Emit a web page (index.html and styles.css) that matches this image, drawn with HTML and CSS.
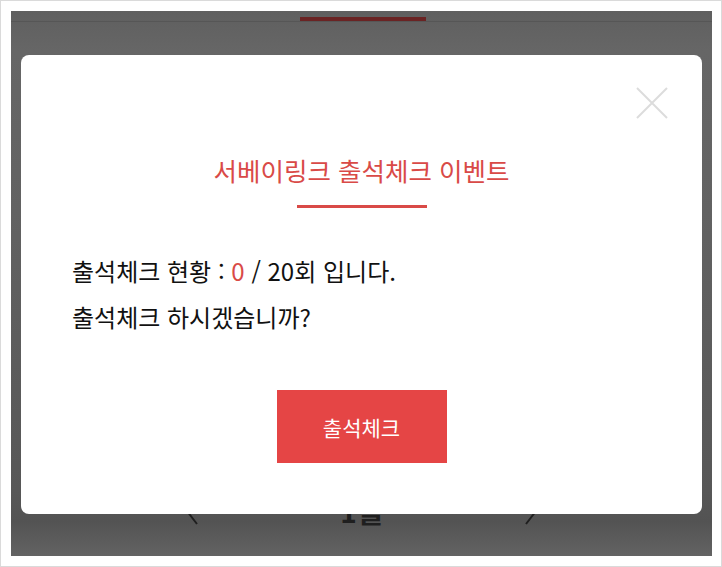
FILE: index.html
```html
<!DOCTYPE html>
<html lang="ko">
<head>
<meta charset="UTF-8">
<meta name="viewport" content="width=device-width, initial-scale=1.0">
<title>출석체크 이벤트</title>
<link rel="stylesheet" href="styles.css">
</head>
<body>
<div class="frame">
    <div class="screen">
        <div class="tab-bar">
            <span class="tab-indicator"></span>
        </div>
        <div class="calendar-head">
            <svg class="arrow" viewBox="0 0 16 30" width="16" height="30"><path d="M13 2 L3 15 L13 28" fill="none" stroke="#1f1f1f" stroke-width="2"/></svg>
            <span class="month">1월</span>
            <svg class="arrow" viewBox="0 0 16 30" width="16" height="30"><path d="M3 2 L13 15 L3 28" fill="none" stroke="#1f1f1f" stroke-width="2"/></svg>
        </div>

        <div class="modal">
            <button class="close" aria-label="닫기">
                <svg viewBox="0 0 32 32" width="32" height="32"><path d="M1 1 L31 31 M31 1 L1 31" stroke="#dcdcdc" stroke-width="2"/></svg>
            </button>
            <h2 class="modal-title">서베이링크 출석체크 이벤트</h2>
            <div class="title-rule"></div>
            <div class="status">
                <p>출석체크 현황 : <span class="count">0</span> / 20회 입니다.</p>
                <p>출석체크 하시겠습니까?</p>
            </div>
            <button class="check-btn">출석체크</button>
        </div>
    </div>
</div>
</body>
</html>
```

FILE: styles.css
```css
:root {
    --red: #e54545;
    --title-red: #d94a47;
    --text-color: #111;
}

body {
    margin: 0;
    font-family: 'Noto Sans CJK KR', 'Noto Sans', sans-serif;
    background: #fff;
}

.frame {
    width: 722px;
    height: 567px;
    box-sizing: border-box;
    border: 1px solid #dadada;
    padding: 10px 9px 10px 10px;
    background: #fff;
}

.screen {
    position: relative;
    height: 545px;
    overflow: hidden;
    background: linear-gradient(#5f5f5f 0, #666 40px, #626262 200px, #575757 480px, #535353 510px, #636363 545px);
}

.tab-bar {
    height: 10px;
    border-bottom: 1px solid #565656;
    display: flex;
    justify-content: center;
}

.tab-indicator {
    width: 126px;
    height: 4px;
    margin-top: 6px;
    margin-left: 2px;
    background: #6a2323;
}

.calendar-head {
    margin-top: 469px;
    display: flex;
    justify-content: center;
    align-items: center;
    gap: 140px;
    height: 40px;
}

.month {
    font-size: 28px;
    font-weight: bold;
    color: #1f1f1f;
}

/* popup */
.modal {
    position: absolute;
    top: 44px;
    left: 10px;
    width: 681px;
    height: 459px;
    box-sizing: border-box;
    padding: 97px 51px 0;
    background: #fff;
    border-radius: 8px;
    display: flex;
    flex-direction: column;
}

.close {
    position: absolute;
    top: 32px;
    right: 34px;
    padding: 0;
    border: none;
    background: none;
    line-height: 0;
}

.modal-title {
    margin: 0;
    text-align: center;
    font-size: 25.5px;
    line-height: 36px;
    font-weight: normal;
    color: var(--title-red);
}

.title-rule {
    width: 130px;
    height: 3px;
    margin: 17px auto 0;
    background: var(--title-red);
}

.status {
    margin-top: 40px;
}

.status p {
    margin: 0;
    font-size: 24px;
    line-height: 46px;
    color: var(--text-color);
}

.count {
    color: var(--title-red);
}

.check-btn {
    align-self: center;
    width: 170px;
    height: 73px;
    margin-top: 50px;
    border: none;
    background: var(--red);
    color: #fff;
    font-family: inherit;
    font-size: 21px;
}
```
